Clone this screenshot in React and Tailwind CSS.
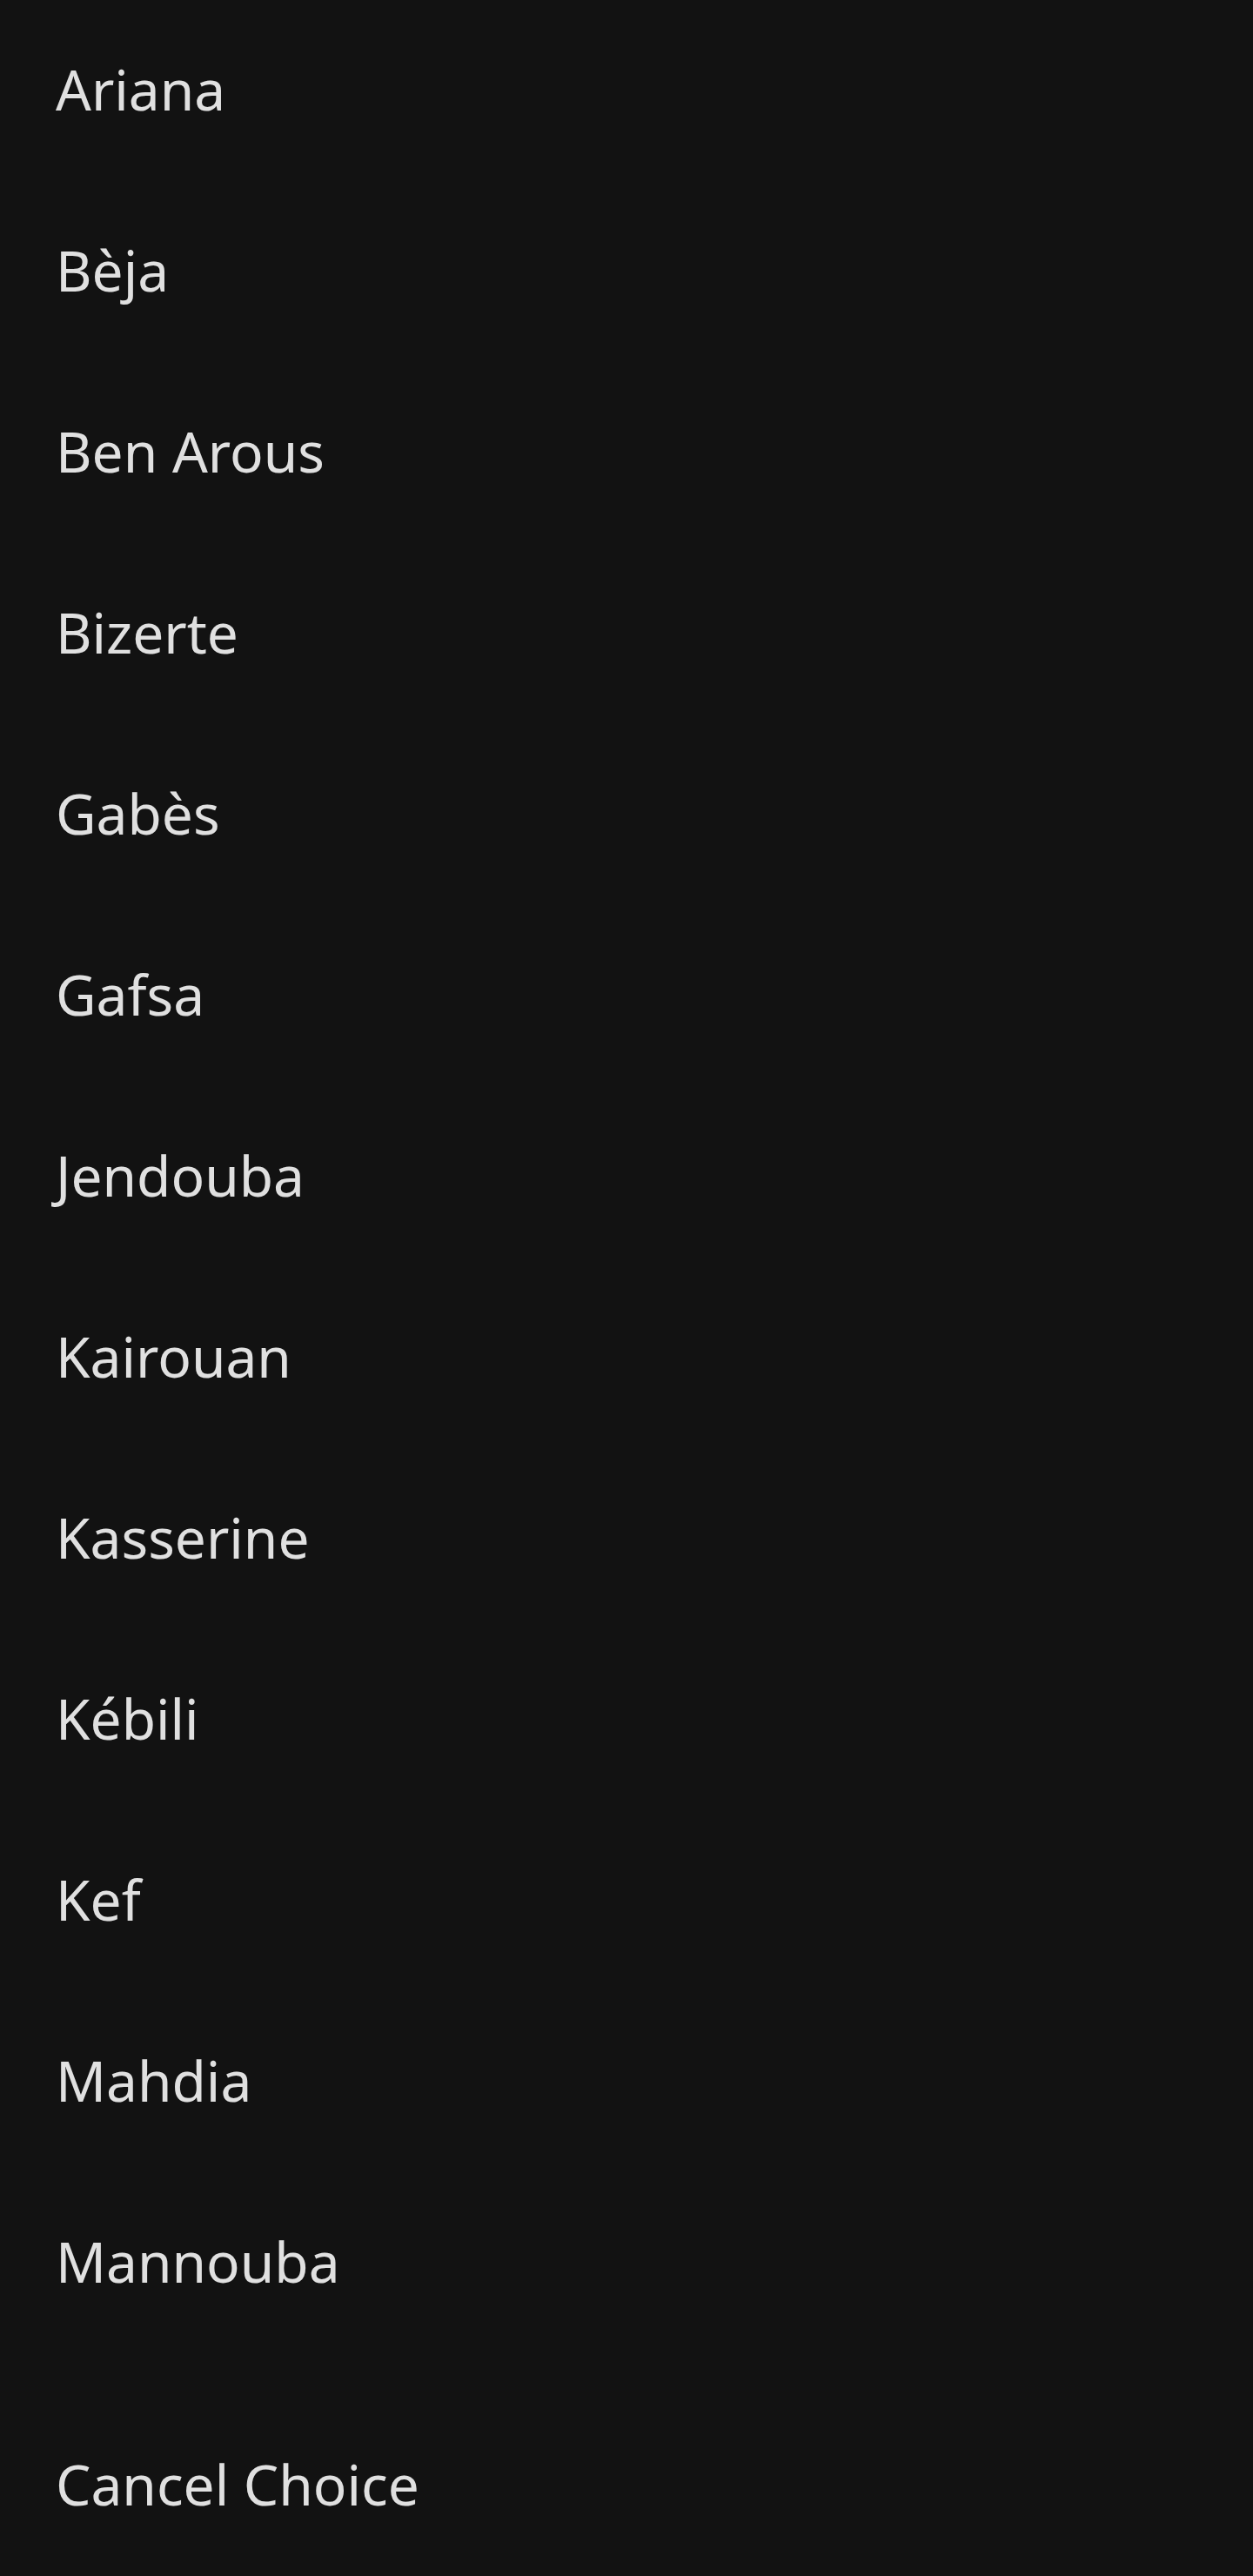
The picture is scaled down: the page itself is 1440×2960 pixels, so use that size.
const items = ["Ariana","Bèja","Ben Arous","Bizerte","Gabès","Gafsa","Jendouba","Kairouan","Kasserine","Kébili","Kef","Mahdia","Mannouba"];

export default function App() {
  return (
    <div className="min-h-[2960px] w-full bg-[#121212] text-[#e0e0e0] font-['Noto_Sans',sans-serif]">
      <ul className="flex flex-col">
        {items.map((t) => (
          <li key={t} className="pl-[64px] pt-[58px] pb-[60px] text-[64px] leading-[90px]">{t}</li>
        ))}
      </ul>
      <div className="mt-[48px] pl-[64px] pt-[58px] pb-[60px] text-[64px] leading-[90px]">Cancel Choice</div>
    </div>
  );
}
